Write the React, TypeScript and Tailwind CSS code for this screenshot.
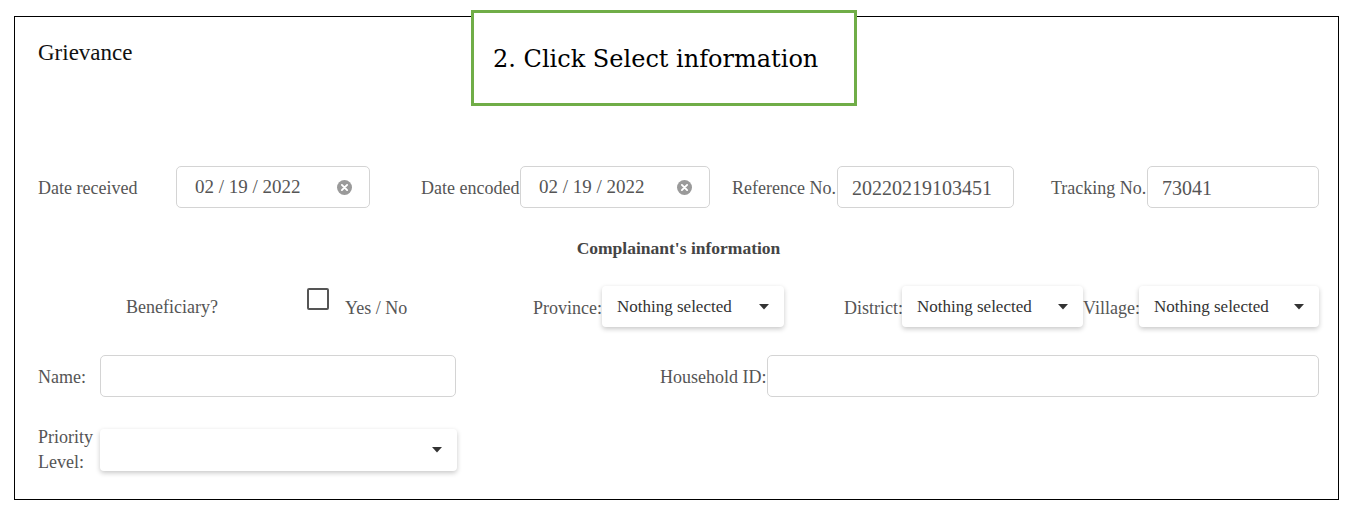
import React from "react";

const serif = "font-['Liberation_Serif',serif]";

function ClearIcon() {
  return (
    <svg width="15" height="15" viewBox="0 0 16 16" className="shrink-0">
      <circle cx="8" cy="8" r="8" fill="#9a9a9a" />
      <path d="M5.2 5.2 L10.8 10.8 M10.8 5.2 L5.2 10.8" stroke="#fff" strokeWidth="2" strokeLinecap="round" />
    </svg>
  );
}

function Caret() {
  return (
    <svg width="10" height="6" viewBox="0 0 10 6" className="shrink-0">
      <path d="M0 0 L10 0 L5 5.5 Z" fill="#333" />
    </svg>
  );
}

function DateInput({ value, width }: { value: string; width: string }) {
  return (
    <div className={`${width} h-[42px] flex items-center justify-between pl-[18px] pr-[17px] border border-[#d4d4d4] rounded-[5px] bg-white`}>
      <span className="text-[19px] text-[#555] pt-[1px]">{value}</span>
      <ClearIcon />
    </div>
  );
}

function TextInput({ value, width }: { value?: string; width: string }) {
  return (
    <div className={`${width} h-[42px] flex items-center pl-[14px] border border-[#d4d4d4] rounded-[5px] bg-white`}>
      <span className="text-[20px] text-[#555] pt-[1px]">{value}</span>
    </div>
  );
}

function Select({ value, width, height }: { value?: string; width: string; height: string }) {
  return (
    <div className={`${width} ${height} flex items-center justify-between pl-[15px] pr-[15px] rounded-[4px] bg-white shadow-[0_2px_5px_rgba(0,0,0,0.22)]`}>
      <span className="text-[17px] text-[#333]">{value}</span>
      <Caret />
    </div>
  );
}

export default function App() {
  return (
    <div className={`relative bg-white w-[1355px] h-[512px] ${serif}`}>
      <div className="absolute left-0 top-0 w-full pt-[16px] pl-[14px]">
        <div className="w-[1325px] border border-black pl-[23px] pr-[19px] pt-[22px] pb-[24px] text-[#555]">
          <div className="h-[28px] leading-[28px] text-[23px] text-[#111]">Grievance</div>

          {/* Row 1 */}
          <div className="mt-[99px] flex items-center text-[18px]">
            <div className="w-[138px] pt-[3px]">Date received</div>
            <DateInput value="02 / 19 / 2022" width="w-[194px]" />
            <div className="ml-[51px] w-[99px] pt-[3px]">Date encoded</div>
            <DateInput value="02 / 19 / 2022" width="w-[190px]" />
            <div className="ml-[22px] w-[105px] pt-[3px]">Reference No.</div>
            <TextInput value="20220219103451" width="w-[177px]" />
            <div className="ml-[37px] w-[96px] pt-[3px]">Tracking No.</div>
            <TextInput value="73041" width="w-[172px]" />
          </div>

          <div className="mt-[28px] h-[24px] leading-[24px] text-center font-bold text-[17.5px] text-[#444]">
            Complainant's information
          </div>

          {/* Row 3 */}
          <div className="mt-[26px] flex items-center text-[18px] h-[41px]">
            <div className="ml-[88px] w-[181px] pt-[2px]">Beneficiary?</div>
            <div className="w-[22px] h-[22px] border-2 border-[#555] rounded-[2px] mb-[15px] self-center" />
            <div className="ml-[16px] w-[188px] pt-[3px]">Yes / No</div>
            <div className="w-[69px] pt-[3px]">Province:</div>
            <Select value="Nothing selected" width="w-[182px]" height="h-[41px]" />
            <div className="ml-[60px] w-[58px] pt-[3px]">District:</div>
            <Select value="Nothing selected" width="w-[181px]" height="h-[41px]" />
            <div className="w-[56px] pt-[3px]">Village:</div>
            <Select value="Nothing selected" width="w-[180px]" height="h-[41px]" />
          </div>

          {/* Row 4 */}
          <div className="mt-[28px] flex items-center text-[18px]">
            <div className="w-[62px] pt-[2px]">Name:</div>
            <TextInput width="w-[356px]" />
            <div className="ml-[204px] w-[107px] pt-[2px]">Household ID:</div>
            <TextInput width="w-[552px]" />
          </div>

          {/* Row 5 */}
          <div className="mt-[27px] flex items-center text-[18px]">
            <div className="w-[62px] leading-[25px] pt-[1px]">
              Priority
              <br />
              Level:
            </div>
            <Select width="w-[357px]" height="h-[42px]" />
          </div>
        </div>
      </div>

      {/* Callout */}
      <div className="absolute left-[471px] top-[10px] w-[386px] h-[96px] border-[3px] border-[#70ad47] bg-white flex items-start pl-[19px] pt-[30px]">
        <span className="font-['DejaVu_Serif',serif] text-[24px] leading-[32px] text-black">
          2. Click Select information
        </span>
      </div>
    </div>
  );
}
